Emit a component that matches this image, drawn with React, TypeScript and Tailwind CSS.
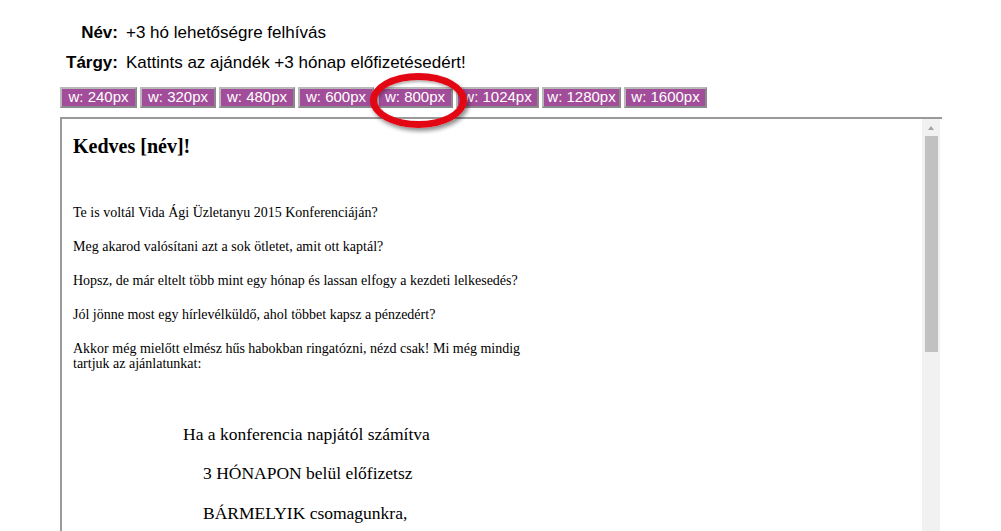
export default function App() {
  const btns: [string, number][] = [["240", 77], ["320", 76], ["480", 76], ["600", 76], ["800", 76], ["1024", 83], ["1280", 79], ["1600", 83]];
  return (
    <div className="relative w-[1001px] h-[531px] overflow-hidden bg-white" style={{ fontFamily: '"Liberation Sans", Arial, sans-serif' }}>
      <div className="pt-[20px]">
        <div className="flex items-baseline h-[24px] text-[17px] text-black">
          <span className="w-[118px] text-right font-bold">Név:</span>
          <span className="ml-[8px]">+3 hó lehetőségre felhívás</span>
        </div>
        <div className="flex items-baseline h-[26px] mt-[6px] text-[17px] text-black">
          <span className="w-[118px] text-right font-bold">Tárgy:</span>
          <span className="ml-[8px]">Kattints az ajándék +3 hónap előfizetésedért!</span>
        </div>
        <div className="flex gap-[3px] ml-[60px] mt-[11px]">
          {btns.map(([b, w]) => (
            <div key={b} style={{ width: w }} className="h-[21px] flex items-center justify-center bg-[#a24d99] text-white text-[15px] border-2 border-[#b9b9b9] border-r-[#8a8a8a] border-b-[#8a8a8a]">
              w: {b}px
            </div>
          ))}
        </div>
        <div className="ml-[60px] mt-[9px] w-[882px] h-[420px] border-t-2 border-l-2 border-[#9a9a9a] flex">
          <div className="flex-1 pl-[11px] pt-[12px] text-black" style={{ fontFamily: '"Liberation Serif", "Times New Roman", serif' }}>
            <div className="text-[20px] font-bold">Kedves [név]!</div>
            <div className="text-[14px] leading-[15px] w-[460px]">
              <p className="mt-[44px]">Te is voltál Vida Ági Üzletanyu 2015 Konferenciáján?</p>
              <p className="mt-[19px]">Meg akarod valósítani azt a sok ötletet, amit ott kaptál?</p>
              <p className="mt-[19px]">Hopsz, de már eltelt több mint egy hónap és lassan elfogy a kezdeti lelkesedés?</p>
              <p className="mt-[19px]">Jól jönne most egy hírlevélküldő, ahol többet kapsz a pénzedért?</p>
              <p className="mt-[19px]">Akkor még mielőtt elmész hűs habokban ringatózni, nézd csak! Mi még mindig tartjuk az ajánlatunkat:</p>
            </div>
            <div className="text-[17.5px] mt-[50px] ml-[110px]">
              <p>Ha a konferencia napjától számítva</p>
              <p className="mt-[13px] ml-[20px]">3 HÓNAPON belül előfizetsz</p>
              <p className="mt-[13px] ml-[20px]">BÁRMELYIK csomagunkra,</p>
            </div>
          </div>
          <div className="w-[18px] bg-[#f1f1f1] flex flex-col items-center mr-[2px]">
            <div className="h-[17px] flex items-center justify-center">
              <div className="w-0 h-0 border-l-[3px] border-r-[3px] border-b-[4px] border-l-transparent border-r-transparent border-b-[#a3a3a3]" />
            </div>
            <div className="w-[13px] h-[216px] bg-[#c1c1c1]" />
          </div>
        </div>
      </div>
      <div className="absolute left-[370px] top-[73px] w-[97px] h-[55px] rounded-[50%] border-[7px] border-[#e30613]" style={{ boxShadow: "2px 3px 4px rgba(0,0,0,0.45), inset 1px 2px 3px rgba(0,0,0,0.3)" }} />
    </div>
  );
}
